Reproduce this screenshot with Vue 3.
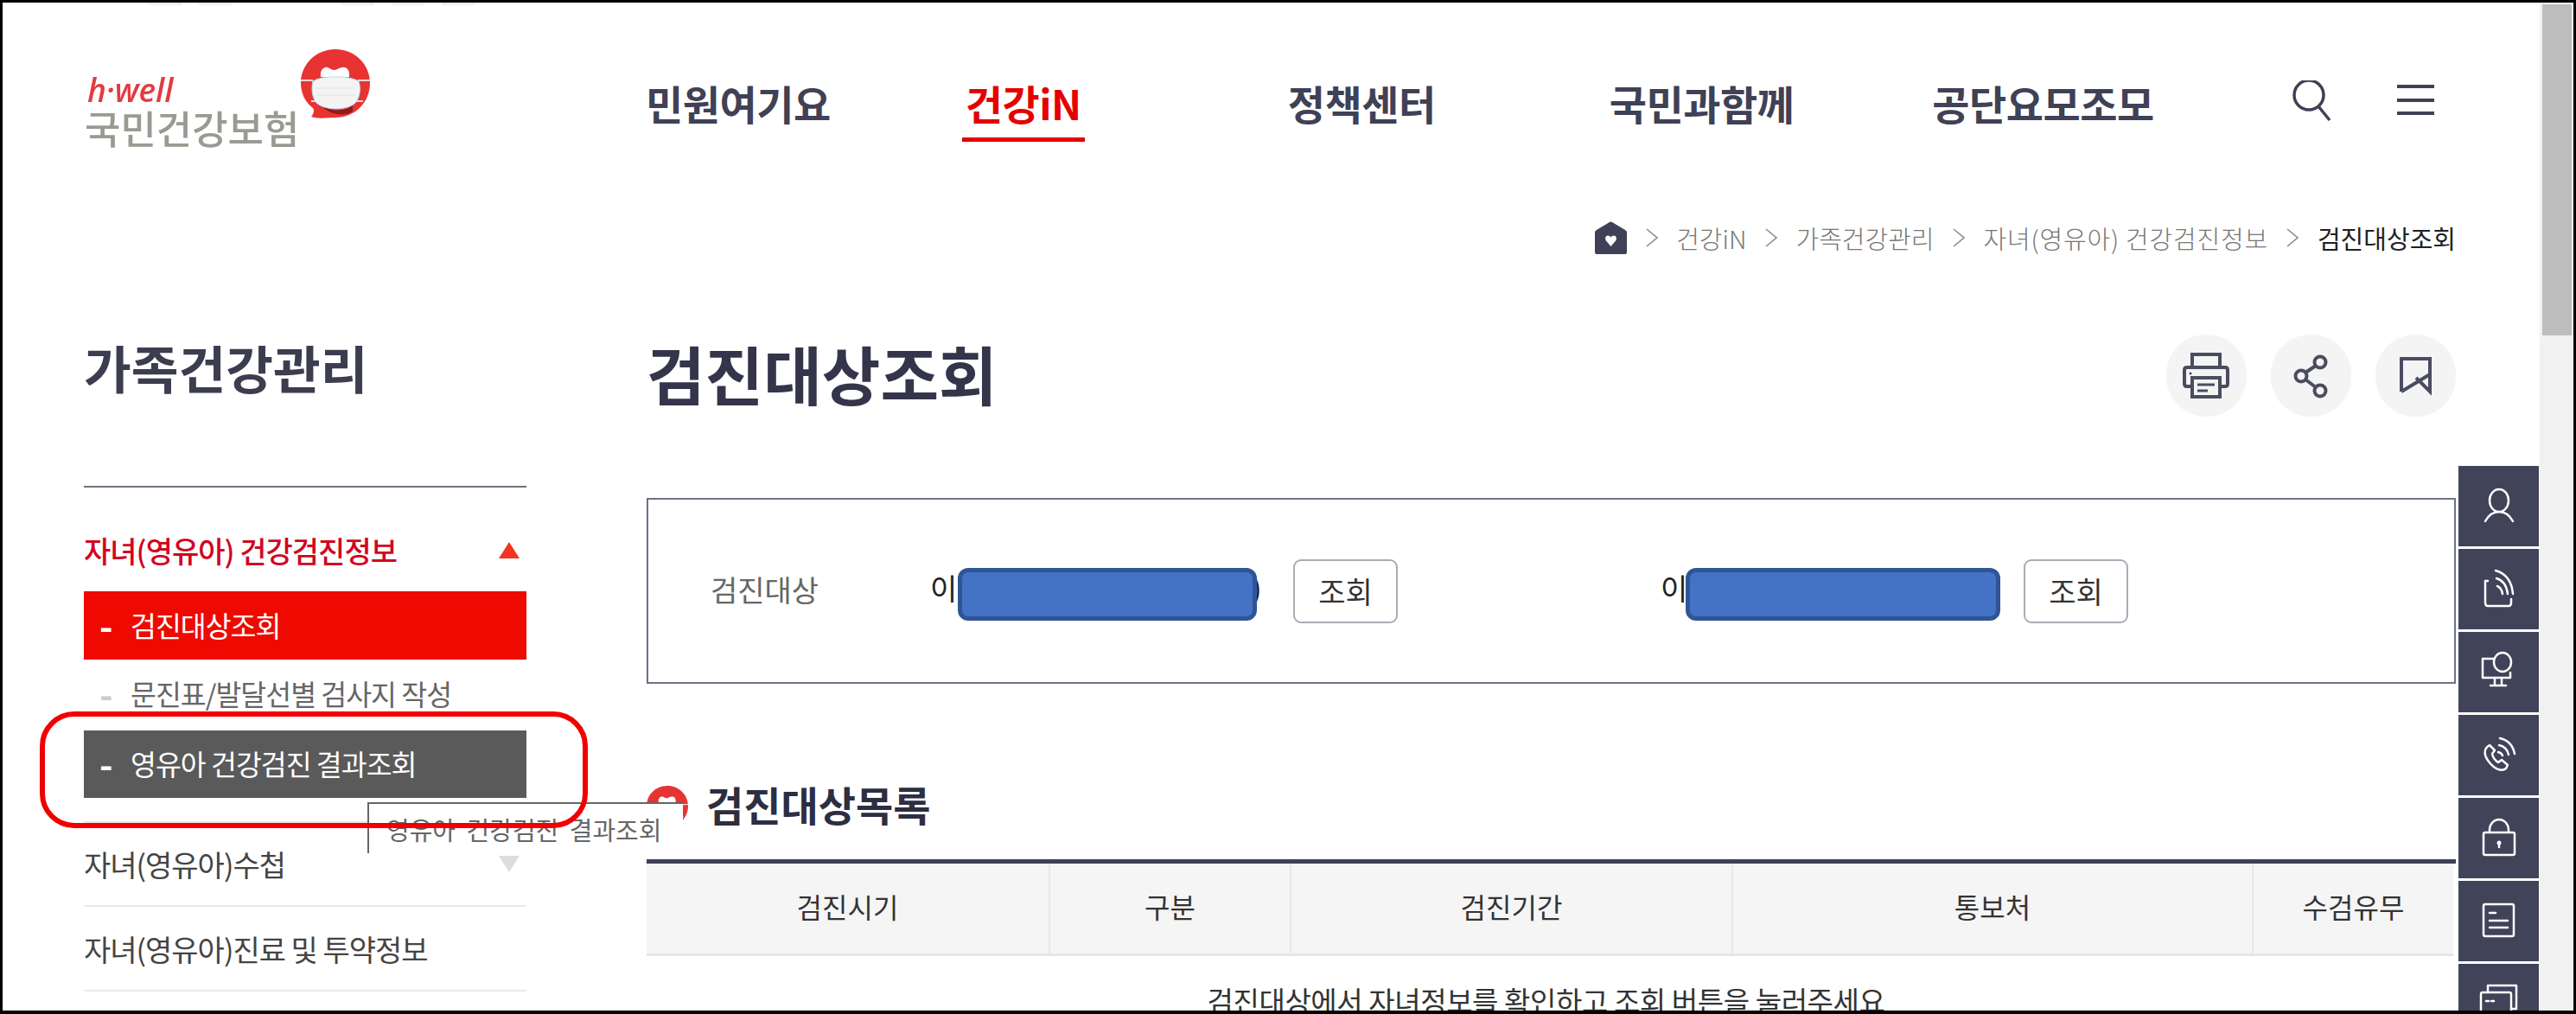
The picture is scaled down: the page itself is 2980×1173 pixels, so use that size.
<script setup>
const topMenu = [
  { label: '민원여기요' },
  { label: '건강iN', active: true },
  { label: '정책센터' },
  { label: '국민과함께' },
  { label: '공단요모조모' }
]

const crumbs = ['건강iN', '가족건강관리', '자녀(영유아) 건강검진정보']

const columns = ['검진시기', '구분', '검진기간', '통보처', '수검유무']

const topTabs = [1, 2, 3, 4, 5]
</script>

<template>
  <div class="frame">
    <div class="page">
      <div class="top-tabs">
        <i v-for="t in topTabs" :key="t"></i>
      </div>

      <header class="header">
        <a class="logo">
          <div class="logo-text">
            <span class="logo-en">h·well</span>
            <span class="logo-ko">국민건강보험</span>
          </div>
          <svg class="bubble" viewBox="0 0 80 80">
            <symbol id="bubble" viewBox="0 0 80 80">
              <path d="M40 0C62 0 80 17 80 39C80 62 62 79 40 79C32 79 20 81 12 78C15 74 16 71 14 68C5 61 0 51 0 39C0 17 18 0 40 0Z" fill="#e83333" />
              <path d="M23 32C22 23 27 20 31 21C34 22 36 24 39 24C42 24 44 21 48 21C53 20 57 24 56 32Z" fill="#fff" />
              <path d="M0 36H14M66 36H80M12 60H22M58 60H72" stroke="#f6d5d5" stroke-width="2" />
              <path d="M21 60C26 72 52 74 60 64L60 72C50 79 28 76 21 60Z" fill="#8f1c1c" />
              <path d="M14 37C24 30 56 30 67 37C70 46 68 58 62 63C52 71 28 71 18 62C13 56 12 46 14 37Z" fill="#f4f4f4" stroke="#bcdcec" stroke-width="1" />
              <path d="M18 45H63M18 53H63" stroke="#e2e2e2" stroke-width="1" />
            </symbol>
            <use href="#bubble" />
          </svg>
        </a>

        <nav class="gnb">
          <a v-for="m in topMenu" :key="m.label" :class="{ on: m.active }">{{ m.label }}</a>
        </nav>

        <div class="util">
          <svg class="search" viewBox="0 0 48 48" fill="none" stroke="#3f4156" stroke-width="3.5">
            <circle cx="21" cy="17" r="17" />
            <path d="M32 30L45 46" />
          </svg>
          <div class="burger"><i></i><i></i><i></i></div>
        </div>
      </header>

      <div class="crumbs">
        <svg class="home" viewBox="0 0 37 38">
          <path d="M0 13Q0 11 2 10L17 1Q18.500 0 20 1L35 10Q37 11 37 13V36Q37 38 35 38H2Q0 38 0 36Z" fill="#3f4156" />
          <path d="M18.500 29L12.500 22Q11 17 15 16.500Q17.500 16.500 18.500 18.500Q19.500 16.500 22 16.500Q26 17 24.500 22Z" fill="#fff" />
        </svg>
        <template v-for="c in crumbs" :key="c">
          <svg class="chev" viewBox="0 0 14 22" fill="none" stroke="#8b8b8b" stroke-width="1.600"><path d="M1 1L13 11L1 21" /></svg>
          <span>{{ c }}</span>
        </template>
        <svg class="chev" viewBox="0 0 14 22" fill="none" stroke="#8b8b8b" stroke-width="1.600"><path d="M1 1L13 11L1 21" /></svg>
        <span class="current">검진대상조회</span>
      </div>

      <div class="body">
        <aside class="side">
          <h2>가족건강관리</h2>
          <div class="side-menu">
            <div class="group open">
              <span>자녀(영유아) 건강검진정보</span>
              <i class="tri up"></i>
            </div>
            <a class="sub active"><b>-</b>검진대상조회</a>
            <a class="sub"><b>-</b>문진표/발달선별 검사지 작성</a>
            <a class="sub hover"><b>-</b>영유아 건강검진 결과조회</a>
            <div class="group first">
              <span>자녀(영유아)수첩</span>
              <i class="tri down"></i>
            </div>
            <div class="group">
              <span>자녀(영유아)진료 및 투약정보</span>
            </div>
          </div>
        </aside>

        <main class="main">
          <div class="title-row">
            <h1>검진대상조회</h1>
            <div class="actions">
              <button>
                <svg viewBox="0 0 93 95" fill="none" stroke="#4a4c60" stroke-width="4">
                  <path d="M30 38V23H62V38" />
                  <path d="M30 60H24Q21 60 21 57V41Q21 38 24 38H68Q71 38 71 41V57Q71 60 68 60H62" />
                  <rect x="30" y="50" width="32" height="22" />
                  <path d="M36 58H56M36 65H48" stroke-width="3" />
                  <circle cx="28" cy="45" r="1.500" fill="#4a4c60" stroke="none" />
                </svg>
              </button>
              <button>
                <svg viewBox="0 0 93 95" fill="none" stroke="#4a4c60" stroke-width="4">
                  <circle cx="57" cy="32" r="6.500" />
                  <circle cx="35" cy="48" r="6.500" />
                  <circle cx="57" cy="65" r="6.500" />
                  <path d="M52 36L40 44M40 52L52 61" />
                </svg>
              </button>
              <button>
                <svg viewBox="0 0 93 95" fill="none" stroke="#4a4c60" stroke-width="4">
                  <path d="M30 66V28H63V66L47 50" />
                  <path d="M63 46L30 66" />
                </svg>
              </button>
            </div>
          </div>

          <section class="panel">
            <span class="panel-label">검진대상</span>
            <div class="target">
              <span class="name">이</span>
              <div class="redact"></div>
              <span class="sliver">)</span>
              <button class="btn">조회</button>
            </div>
            <div class="target second">
              <span class="name">이</span>
              <div class="redact"></div>
              <button class="btn">조회</button>
            </div>
          </section>

          <div class="section-head">
            <svg viewBox="0 0 80 80"><use href="#bubble" /></svg>
            <h3>검진대상목록</h3>
          </div>

          <div class="table">
            <div class="thead">
              <div v-for="c in columns" :key="c">{{ c }}</div>
            </div>
            <p class="empty">검진대상에서 자녀정보를 확인하고 조회 버튼을 눌러주세요</p>
          </div>
        </main>
      </div>
    </div>

    <div class="scrollbar"><div class="thumb"></div></div>

    <!-- quick menu sits over the page -->
    <ul class="rail">
      <li>
        <svg viewBox="0 0 93 93">
          <ellipse cx="47" cy="40" rx="11" ry="13" />
          <path d="M31 64C36 55 42 53 47 53C52 53 58 55 63 64" />
        </svg>
      </li>
      <li>
        <svg viewBox="0 0 93 93">
          <path d="M34 37H31V62Q31 66 34 66H58Q61 66 61 62V58" />
          <path d="M43 25Q61 30 63 52M44 34Q55 37 57 52M45 43Q50 45 51 52" />
        </svg>
      </li>
      <li>
        <svg viewBox="0 0 93 93">
          <path d="M40 31H28V53H60V47" />
          <path d="M42 53V60M50 53V60M37 62H55" />
          <ellipse cx="51" cy="35" rx="10" ry="11" />
        </svg>
      </li>
      <li>
        <svg viewBox="0 0 93 93">
          <path d="M36 35C29 39 29 46 35 54C42 63 50 66 55 62L57 58L50 52L46 55C43 53 40 50 39 45L42 41Z" />
          <path d="M48 27Q62 30 65 45M47 35Q56 37 58 46M46 43Q50 44 51 47" />
        </svg>
      </li>
      <li>
        <svg viewBox="0 0 93 93">
          <rect x="29" y="40" width="36" height="26" rx="2" />
          <path d="M36 40V37A11 12 0 0 1 58 37V40" />
          <path d="M47 52V57" />
          <circle cx="47" cy="52" r="2.500" fill="#fff" stroke="none" />
        </svg>
      </li>
      <li>
        <svg viewBox="0 0 93 93">
          <rect x="29" y="27" width="35" height="37" rx="2" />
          <path d="M36 37H43M36 46H57M36 54H57" />
        </svg>
      </li>
      <li>
        <svg viewBox="0 0 93 93">
          <path d="M34 33V25H67V52H61" />
          <rect x="26" y="33" width="35" height="30" rx="2" />
          <path d="M32 43H35M38 43H41" />
        </svg>
      </li>
    </ul>

    <div class="tooltip">영유아 건강검진 결과조회</div>
    <div class="mark"></div>
  </div>
</template>

<style>
html, body {
  margin: 0;
  background: #fff;
}
</style>

<style scoped>
.frame {
  position: relative;
  box-sizing: border-box;
  width: 2980px;
  height: 1173px;
  border: 3px solid #000;
  border-bottom-width: 4px;
  background: #fff;
  overflow: hidden;
  display: flex;
  font-family: "Noto Sans CJK KR", "Noto Sans", sans-serif;
  color: #333;
}

.page {
  flex: 1;
  min-width: 0;
}

.top-tabs {
  display: flex;
  height: 4px;
  padding-left: 169px;
  gap: 20px;
}

.top-tabs i {
  width: 38px;
  height: 3px;
  background: #eeeeee;
}

.top-tabs i:nth-child(3) {
  margin-left: 107px;
}

.header {
  display: flex;
  height: 196px;
  box-sizing: border-box;
  padding-right: 122px;
}

.logo {
  display: flex;
  align-items: flex-start;
  margin: 50px 0 0 95px;
  filter: blur(0.5px);
}

.logo-text {
  display: flex;
  flex-direction: column;
  padding-top: 26px;
  width: 250px;
}

.logo-en {
  font-family: "Open Sans", sans-serif;
  font-style: italic;
  font-weight: 600;
  font-size: 37px;
  line-height: 41px;
  color: #e23b40;
  padding-left: 3px;
}

.logo-ko {
  font-size: 45px;
  line-height: 48px;
  color: #9a9a92;
  font-weight: 500;
  white-space: nowrap;
}

.bubble {
  width: 80px;
  height: 80px;
}

.gnb {
  display: flex;
  margin-top: 81px;
  height: 76px;
  font-size: 47px;
  font-weight: 700;
  line-height: 62px;
  color: #3f4156;
}

.gnb a {
  height: 76px;
  box-sizing: border-box;
  white-space: nowrap;
  letter-spacing: -0.5px;
}

.gnb a:nth-child(1) {
  margin-left: 319px;
}

.gnb a:nth-child(2) {
  margin-left: 152px;
  padding: 0 4px;
}

.gnb a:nth-child(3) {
  margin-left: 235px;
}

.gnb a:nth-child(4) {
  margin-left: 201px;
}

.gnb a:nth-child(5) {
  margin-left: 160px;
}

.gnb a.on {
  color: #e60000;
  border-bottom: 5px solid #e60000;
}

.util {
  display: flex;
  margin-left: auto;
  align-items: flex-start;
}

.search {
  width: 48px;
  height: 48px;
  margin-top: 86px;
}

.burger {
  margin: 91px 0 0 75px;
  display: flex;
  flex-direction: column;
  gap: 11.500px;
}

.burger i {
  display: block;
  width: 43px;
  height: 4px;
  background: #3f4156;
}

.crumbs {
  display: flex;
  align-items: center;
  justify-content: flex-end;
  gap: 21.500px;
  height: 40px;
  margin-top: 52px;
  padding-right: 97px;
  font-size: 29px;
  color: #777;
  font-weight: 300;
  white-space: nowrap;
}

.crumbs span:nth-of-type(3) {
  letter-spacing: 0.8px;
}

.home {
  width: 37px;
  height: 38px;
}

.chev {
  width: 14px;
  height: 22px;
}

.crumbs .current {
  color: #222;
  font-weight: 400;
}

.body {
  display: flex;
  margin-top: 92px;
  padding-left: 94px;
}

.side {
  width: 512px;
  flex: none;
}

.side h2 {
  margin: 0 0 101px;
  font-size: 59.500px;
  line-height: 74px;
  font-weight: 700;
  color: #3c3d4f;
}

.side-menu {
  border-top: 2px solid #70727f;
  font-size: 34px;
  letter-spacing: -1px;
  color: #444;
}

.group {
  display: flex;
  justify-content: space-between;
  align-items: center;
  height: 98px;
  box-sizing: border-box;
  border-bottom: 2px solid #e9e9ee;
  padding-right: 8px;
  white-space: nowrap;
}

.group.open {
  height: 120px;
  padding-top: 24px;
  border-bottom: 0;
  color: #d2041f;
  font-weight: 500;
}

.group.first {
  margin-top: 0;
  border-top: 2px solid #e9e9ee;
  height: 99px;
}

.tri {
  width: 0;
  height: 0;
  border-left: 12px solid transparent;
  border-right: 12px solid transparent;
}

.tri.up {
  border-bottom: 19px solid #f5331f;
}

.tri.down {
  border-top: 19px solid #dddddd;
}

.sub {
  display: flex;
  align-items: center;
  box-sizing: border-box;
  height: 79px;
  font-size: 32.500px;
  color: #666;
  white-space: nowrap;
}

.sub b {
  width: 54px;
  padding-left: 18px;
  box-sizing: border-box;
  font-size: 42px;
  font-weight: 700;
  color: #ccc;
}

.sub:nth-of-type(2) {
  height: 82px;
  padding-bottom: 6px;
}

.sub.active {
  background: #ee0a00;
  color: #fff;
  padding-bottom: 2px;
}

.sub.hover {
  background: #5a5a5a;
  color: #fff;
  height: 78px;
  margin-bottom: 27px;
  padding-bottom: 4px;
}

.sub.active b,
.sub.hover b {
  color: #fff;
}

.main {
  margin-left: 139px;
  width: 2093px;
  flex: none;
}

.title-row {
  display: flex;
  justify-content: space-between;
  align-items: center;
  height: 95px;
}

h1 {
  margin: 0;
  padding-bottom: 6px;
  font-size: 73.500px;
  line-height: 89px;
  font-weight: 700;
  color: #34354a;
}

.actions {
  display: flex;
  gap: 28px;
}

.actions button {
  width: 93px;
  height: 95px;
  padding: 0;
  border: 0;
  border-radius: 46px;
  background: #f4f4f4;
}

.actions svg {
  display: block;
  width: 93px;
  height: 95px;
}

.panel {
  display: flex;
  align-items: center;
  box-sizing: border-box;
  height: 215px;
  margin-top: 94px;
  padding-left: 72px;
  border: 2px solid #6f7189;
}

.panel-label {
  width: 254px;
  font-size: 34px;
  color: #666;
  padding-bottom: 4px;
}

.target {
  position: relative;
  display: flex;
  align-items: center;
  width: 541px;
  font-size: 34px;
  color: #222;
}

.target.second {
  margin-left: 304px;
}

.target .name {
  width: 32px;
  padding-bottom: 8px;
}

.redact {
  position: relative;
  z-index: 1;
  box-sizing: border-box;
  width: 347px;
  height: 61px;
  margin-top: 8px;
  border: 5px solid #2f5597;
  border-radius: 12px;
  background: #4472c4;
}

.sliver {
  width: 14px;
  margin-left: -6px;
  padding-bottom: 8px;
  font-size: 34px;
}

.btn {
  box-sizing: border-box;
  width: 121px;
  height: 74px;
  margin-left: 34px;
  border: 2px solid #a9acb5;
  border-radius: 9px;
  background: #fff;
  font-family: inherit;
  font-size: 34px;
  color: #333;
}

.target.second .redact {
  width: 365px;
  margin-left: -3px;
}

.target.second .btn {
  margin-left: 27px;
}

.section-head {
  display: flex;
  align-items: center;
  gap: 21px;
  height: 48px;
  margin-top: 118px;
}

.section-head svg {
  width: 48px;
  height: 48px;
}

h3 {
  margin: 0;
  padding-bottom: 6px;
  font-size: 47px;
  line-height: 48px;
  font-weight: 700;
  color: #2d2e42;
}

.table {
  margin-top: 37px;
  border-top: 5px solid #3e4057;
}

.thead {
  display: grid;
  grid-template-columns: 465px 279px 511px 602px 233px;
  height: 107px;
  box-sizing: border-box;
  width: 2090px;
  background: #f5f5f5;
  border-bottom: 3px solid #e4e6e9;
  font-size: 32px;
  color: #333;
}

.thead div {
  display: flex;
  align-items: center;
  justify-content: center;
  padding-bottom: 6px;
  border-left: 2px solid #e8e8e8;
}

.thead div:first-child {
  border-left: 0;
}

.empty {
  margin: 28px 12px 0 0;
  font-size: 33px;
  line-height: 46px;
  text-align: center;
  color: #333;
  letter-spacing: -0.4px;
}

.scrollbar {
  flex: none;
  width: 39px;
  background: #f1f1f1;
  padding: 2px 2px 0 3px;
  box-sizing: border-box;
}

.thumb {
  height: 383px;
  background: #bdbdbd;
}

.rail {
  position: absolute;
  top: 536px;
  left: 2841px;
  width: 93px;
  margin: 0;
  padding: 0;
  list-style: none;
  display: flex;
  flex-direction: column;
  gap: 3px;
}

.rail li {
  height: 93px;
  background: #414359;
}

.rail svg {
  display: block;
  width: 93px;
  height: 93px;
  fill: none;
  stroke: #fff;
  stroke-width: 2.500;
  stroke-linecap: round;
  stroke-linejoin: round;
}

.tooltip {
  position: absolute;
  left: 422px;
  top: 925px;
  width: 365px;
  height: 59px;
  box-sizing: border-box;
  padding: 9px 0 0 20px;
  border-top: 2px solid #666;
  border-left: 2px solid #666;
  background: #fff;
  font-size: 29px;
  line-height: 40px;
  color: #666;
  word-spacing: 6px;
  white-space: nowrap;
}

.mark {
  position: absolute;
  left: 43px;
  top: 820px;
  width: 634px;
  height: 135px;
  box-sizing: border-box;
  border: 6px solid #f00000;
  border-radius: 40px;
}
</style>
